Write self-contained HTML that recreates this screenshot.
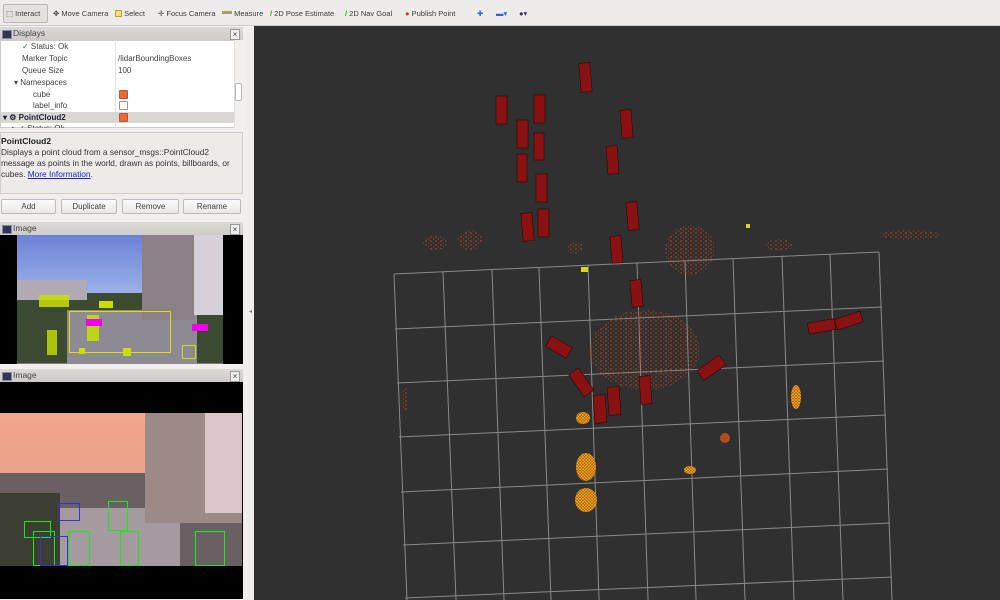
<!DOCTYPE html>
<html><head><meta charset="utf-8"><style>
*{margin:0;padding:0;box-sizing:border-box}
body{width:1000px;height:600px;overflow:hidden;background:#f0efed;font-family:"Liberation Sans",sans-serif;font-size:8px;color:#333;position:relative}
.abs{position:absolute}
.tb{left:0;top:0;width:1000px;height:26px;background:#edecea;border-bottom:1px solid #cfcdc9}
.tb span{position:absolute;top:9px;font-size:7.5px;color:#3c3c3c}
.hdr{position:absolute;left:0;width:243px;height:13px;background:linear-gradient(#dcdad6,#cfccc8);font-size:8.5px;color:#444;padding-left:13px;line-height:13px}
.hdr:before{content:"";position:absolute;left:2px;top:3px;width:8px;height:7px;background:#335;border:1px solid #88a}
.hdr:after{content:"×";position:absolute;right:3px;top:0;font-size:8px;width:8px;height:9px;line-height:9px;text-align:center;border:1px solid #999;top:2px;background:#eee}
.row{position:absolute;font-size:8px;color:#444}
.btn{position:absolute;top:199px;height:15px;border:1px solid #bbb;border-radius:2px;background:linear-gradient(#fbfbfa,#e9e8e6);text-align:center;line-height:13px;font-size:8px;color:#444}
.cb{position:absolute;left:119px;width:9px;height:9px;border:1px solid #999;border-radius:1px;background:#fff}
.cb.on{background:#e46b3b;border-color:#c0552a}
</style></head><body>
<div class="abs tb">
 <div class="abs" style="left:3px;top:4px;width:45px;height:19px;border:1px solid #bcbab5;border-radius:2px;background:#e3e1dd"></div>
 <span style="left:6px">⬚ Interact</span>
 <span style="left:53px">✥ Move Camera</span>
 <span style="left:115px"><b style="display:inline-block;width:7px;height:7px;background:#f3e27a;border:1px solid #b9a330;vertical-align:-1px"></b> Select</span>
 <span style="left:158px">✛ Focus Camera</span>
 <span style="left:222px"><b style="display:inline-block;width:10px;height:3px;background:#a6a070;vertical-align:2px"></b> Measure</span>
 <span style="left:270px"><b style="color:#2a2">/</b> 2D Pose Estimate</span>
 <span style="left:345px"><b style="color:#2a2">/</b> 2D Nav Goal</span>
 <span style="left:405px"><b style="color:#d33">●</b> Publish Point</span>
 <span style="left:477px;color:#36c">✚</span>
 <span style="left:496px;color:#36c">▬▾</span>
 <span style="left:519px;color:#336">●▾</span>
</div>
<div class="hdr" style="top:27px">Displays</div>
<div class="abs" style="left:0;top:40px;width:243px;height:88px;background:#fff;border:1px solid #ccc"></div>
<div class="abs" style="left:115px;top:40px;width:1px;height:88px;background:#e2e2e2"></div>
<div class="abs" style="left:234px;top:40px;width:9px;height:88px;background:#f1f0ee;border-left:1px solid #ddd"></div>
<div class="abs" style="left:235px;top:83px;width:7px;height:18px;background:#fff;border:1px solid #bbb;border-radius:2px"></div>
<div class="row" style="left:22px;top:42px"><span style="color:#2a7a2a">✓</span> Status: Ok</div>
<div class="row" style="left:22px;top:54px">Marker Topic</div><div class="row" style="left:118px;top:54px">/lidarBoundingBoxes</div>
<div class="row" style="left:22px;top:66px">Queue Size</div><div class="row" style="left:118px;top:66px">100</div>
<div class="row" style="left:14px;top:78px">▾ Namespaces</div>
<div class="row" style="left:33px;top:90px">cube</div><div class="cb on" style="top:90px"></div>
<div class="row" style="left:33px;top:101px">label_info</div><div class="cb" style="top:101px"></div>
<div class="abs" style="left:1px;top:112px;width:233px;height:11px;background:#d9d7d3"></div>
<div class="row" style="left:3px;top:113px;font-weight:bold;color:#223">▾ ⚙ PointCloud2</div><div class="cb on" style="top:113px"></div>
<div class="row" style="left:12px;top:124px;height:4px;overflow:hidden">▸ ✓ Status: Ok</div>
<div class="abs" style="left:0;top:132px;width:243px;height:62px;background:#ecebe8;border:1px solid #d0cec9"></div>
<div class="row" style="left:1px;top:136px;font-size:8.5px;font-weight:bold;color:#222">PointCloud2</div>
<div class="row" style="left:1px;top:147px;font-size:8.3px;line-height:11px;color:#333;width:240px">Displays a point cloud from a sensor_msgs::PointCloud2 message as points in the world, drawn as points, billboards, or cubes. <u style="color:#22c">More Information</u>.</div>
<div class="btn" style="left:1px;width:55px">Add</div>
<div class="btn" style="left:61px;width:56px">Duplicate</div>
<div class="btn" style="left:122px;width:57px">Remove</div>
<div class="btn" style="left:183px;width:58px">Rename</div>
<div class="hdr" style="top:222px">Image</div>
<div class="abs" style="left:0;top:235px;width:243px;height:129px;background:#000"></div>
<div class="abs" style="left:17px;top:235px;width:206px;height:129px;background:linear-gradient(#6b82d8 0%,#9bb0e6 45%,#9a9a9a 60%,#7a7680 100%);overflow:hidden">
 <div class="abs" style="left:0;top:58px;width:206px;height:70px;background:#3c4a32"></div>
 <div class="abs" style="left:50px;top:75px;width:130px;height:55px;background:#8d8a93"></div>
 <div class="abs" style="left:125px;top:0;width:52px;height:85px;background:#8a8086"></div>
 <div class="abs" style="left:177px;top:0;width:29px;height:80px;background:#d6d1d8"></div>
 <div class="abs" style="left:0;top:45px;width:70px;height:20px;background:#b0aab5"></div>
 <div class="abs" style="left:52px;top:76px;width:102px;height:42px;border:1px solid #dde000"></div>
 <div class="abs" style="left:82px;top:66px;width:14px;height:7px;background:#c7e000"></div>
 <div class="abs" style="left:70px;top:80px;width:12px;height:26px;background:#c7e000;opacity:.85"></div>
 <div class="abs" style="left:22px;top:60px;width:30px;height:12px;background:#c7e000;opacity:.85"></div>
 <div class="abs" style="left:69px;top:84px;width:16px;height:7px;background:#e0e"></div>
 <div class="abs" style="left:175px;top:89px;width:16px;height:7px;background:#e0e"></div>
 <div class="abs" style="left:30px;top:95px;width:10px;height:25px;background:#c7e000;opacity:.8"></div>
 <div class="abs" style="left:62px;top:113px;width:6px;height:6px;background:#c7e000"></div>
 <div class="abs" style="left:106px;top:113px;width:8px;height:8px;background:#c7e000"></div>
 <div class="abs" style="left:165px;top:110px;width:14px;height:14px;border:1px solid #c7e000"></div>
</div>
<div class="hdr" style="top:369px">Image</div>
<div class="abs" style="left:0;top:382px;width:243px;height:217px;background:#000"></div>
<div class="abs" style="left:0;top:413px;width:242px;height:153px;background:linear-gradient(#f2a68a 0%,#e6a08a 55%,#7a6660 70%,#857a7c 100%);overflow:hidden">
 <div class="abs" style="left:0;top:60px;width:242px;height:93px;background:#6a6064"></div>
 <div class="abs" style="left:60px;top:95px;width:120px;height:60px;background:#a59aa0"></div>
 <div class="abs" style="left:145px;top:0;width:97px;height:110px;background:#9c8a88"></div>
 <div class="abs" style="left:205px;top:0;width:37px;height:100px;background:#dac6c6"></div>
 <div class="abs" style="left:0;top:80px;width:60px;height:73px;background:#3c3e34"></div>
 <div class="abs" style="left:24px;top:108px;width:27px;height:17px;border:1px solid #1e1"></div>
 <div class="abs" style="left:33px;top:118px;width:22px;height:35px;border:1px solid #1e1"></div>
 <div class="abs" style="left:40px;top:123px;width:28px;height:30px;border:1px solid #33d"></div>
 <div class="abs" style="left:68px;top:118px;width:22px;height:35px;border:1px solid #1e1"></div>
 <div class="abs" style="left:120px;top:118px;width:19px;height:35px;border:1px solid #1e1"></div>
 <div class="abs" style="left:195px;top:118px;width:30px;height:35px;border:1px solid #1e1"></div>
 <div class="abs" style="left:58px;top:90px;width:22px;height:18px;border:1px solid #33d"></div>
 <div class="abs" style="left:108px;top:88px;width:20px;height:30px;border:1px solid #1e1"></div>
</div>
<div class="abs" style="left:249px;top:308px;font-size:6px;color:#777">◂</div>
<div class="abs" style="left:254px;top:26px;width:746px;height:574px;background:#303030;overflow:hidden">
<svg width="746" height="574" viewBox="254 26 746 574" style="position:absolute;left:0;top:0">
 <defs>
  <pattern id="pr" width="5" height="4" patternUnits="userSpaceOnUse"><circle cx="1" cy="1" r=".7" fill="#c84a1c"/><circle cx="3.5" cy="3" r=".6" fill="#a83a18"/></pattern>
  <pattern id="po" width="3" height="3" patternUnits="userSpaceOnUse"><rect width="3" height="3" fill="#b86a10"/><circle cx="1" cy="1" r="1" fill="#f0a020"/><circle cx="2.5" cy="2.5" r=".6" fill="#e8c020"/></pattern>
 </defs>
 <g stroke="#8a8a8a" stroke-width="1" fill="none">
  <line x1="394" y1="274" x2="879" y2="252"/>
  <line x1="395" y1="329" x2="882" y2="307"/>
  <line x1="397" y1="383" x2="884" y2="361"/>
  <line x1="399" y1="437" x2="886" y2="415"/>
  <line x1="401" y1="492" x2="888" y2="469"/>
  <line x1="403" y1="545" x2="890" y2="523"/>
  <line x1="405" y1="598" x2="892" y2="577"/>
  <line x1="394" y1="274" x2="407" y2="600"/>
  <line x1="443" y1="272" x2="456" y2="600"/>
  <line x1="492" y1="270" x2="504" y2="600"/>
  <line x1="539" y1="268" x2="551" y2="600"/>
  <line x1="588" y1="265" x2="599" y2="600"/>
  <line x1="637" y1="263" x2="648" y2="600"/>
  <line x1="685" y1="261" x2="696" y2="600"/>
  <line x1="733" y1="259" x2="745" y2="600"/>
  <line x1="782" y1="256" x2="794" y2="600"/>
  <line x1="830" y1="254" x2="843" y2="600"/>
  <line x1="879" y1="252" x2="892" y2="600"/>
 </g>
 <g fill="url(#pr)">
  <ellipse cx="645" cy="350" rx="55" ry="40"/>
  <ellipse cx="690" cy="250" rx="25" ry="25"/>
  <ellipse cx="435" cy="243" rx="12" ry="7"/>
  <ellipse cx="470" cy="240" rx="12" ry="10"/>
  <ellipse cx="575" cy="248" rx="8" ry="6"/>
  <ellipse cx="780" cy="245" rx="14" ry="6"/>
  <ellipse cx="405" cy="400" rx="3" ry="12"/>
  <ellipse cx="910" cy="235" rx="30" ry="5"/>
 </g>
 <g fill="url(#po)">
  <ellipse cx="586" cy="467" rx="10" ry="14"/>
  <ellipse cx="586" cy="500" rx="11" ry="12"/>
  <ellipse cx="583" cy="418" rx="7" ry="6"/>
  <ellipse cx="690" cy="470" rx="6" ry="4"/>
  <ellipse cx="796" cy="397" rx="5" ry="12"/>
 </g>
 <ellipse cx="725" cy="438" rx="5" ry="5" fill="#d8501c" opacity=".8"/>
 <rect x="581" y="267" width="7" height="5" fill="#d8d810"/>
 <rect x="746" y="224" width="4" height="4" fill="#d8d810"/>
 <g fill="#8a1111" stroke="#1c0808" stroke-width=".5">
  <rect x="580" y="63" width="11" height="29" transform="rotate(-5 585 78)"/>
  <rect x="496" y="96" width="11" height="28"/>
  <rect x="534" y="95" width="11" height="28"/>
  <rect x="517" y="120" width="11" height="28"/>
  <rect x="621" y="110" width="11" height="28" transform="rotate(-5 626 124)"/>
  <rect x="534" y="133" width="10" height="27"/>
  <rect x="517" y="154" width="10" height="28"/>
  <rect x="607" y="146" width="11" height="28" transform="rotate(-4 612 160)"/>
  <rect x="536" y="174" width="11" height="28"/>
  <rect x="522" y="213" width="11" height="28" transform="rotate(-5 527 227)"/>
  <rect x="538" y="209" width="11" height="28"/>
  <rect x="627" y="202" width="11" height="28" transform="rotate(-5 632 216)"/>
  <rect x="611" y="236" width="11" height="27" transform="rotate(-5 616 250)"/>
  <rect x="631" y="280" width="11" height="27" transform="rotate(-5 636 293)"/>
  <rect x="553" y="335" width="12" height="24" transform="rotate(-60 559 347)"/>
  <rect x="575" y="369" width="12" height="27" transform="rotate(-35 581 382)"/>
  <rect x="594" y="395" width="12" height="28" transform="rotate(-4 600 409)"/>
  <rect x="608" y="387" width="12" height="28" transform="rotate(-4 614 401)"/>
  <rect x="640" y="376" width="11" height="28" transform="rotate(-4 646 390)"/>
  <rect x="705" y="354" width="12" height="27" transform="rotate(55 711 368)"/>
  <rect x="816" y="312" width="11" height="27" transform="rotate(80 821 326)"/>
  <rect x="844" y="307" width="11" height="27" transform="rotate(72 849 320)"/>
 </g>
</svg>
</div>
</body></html>
